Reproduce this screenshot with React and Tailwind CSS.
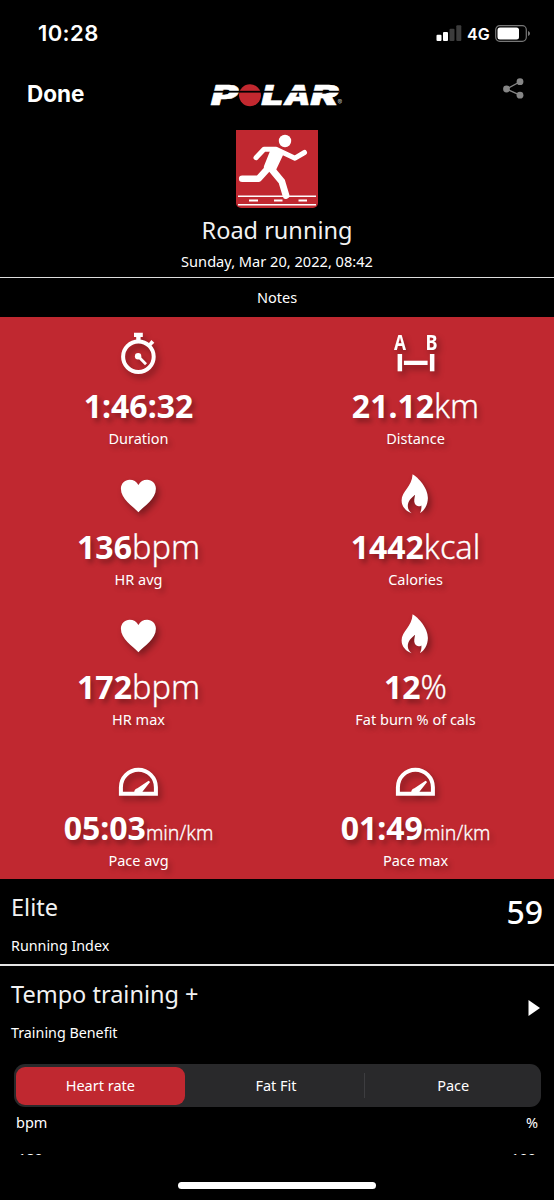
import clsx from 'clsx';

const TABS = ['Heart rate', 'Fat Fit', 'Pace'];

function StopwatchIcon() {
  return (
    <g>
      <circle cx="24" cy="27.7" r="15.3" fill="none" stroke="#fff" strokeWidth="4" />
      <path d="M19.6 3.7h8.8v4.2h-2.2v4h-4.4v-4h-2.2z" />
      <path d="M33.6 15.2l3.4-4.2 2.9 2.8-3.8 3.8z" />
      <circle cx="23.7" cy="27.3" r="3.2" />
      <path d="M24 27.5l7.6 7.8" stroke="#fff" strokeWidth="2.8" />
    </g>
  );
}

function DistanceIcon() {
  return (
    <g>
      <text x="2.6" y="20.8" fontSize="20.5" fontWeight="700" textLength="12" lengthAdjust="spacingAndGlyphs">A</text>
      <text x="34.2" y="20.8" fontSize="20.5" fontWeight="700" textLength="12" lengthAdjust="spacingAndGlyphs">B</text>
      <rect x="6.2" y="25" width="4.5" height="17.3" />
      <rect x="12.5" y="31.7" width="23.7" height="4.3" />
      <rect x="38.5" y="25" width="4.5" height="17.3" />
    </g>
  );
}

function HeartIcon() {
  return (
    <path d="M24 42.2C18 36 6.5 29 6.5 18.8c0-5.2 4-9 8.8-9 3.7 0 7 1.8 8.7 5.2 1.7-3.4 5-5.2 8.7-5.2 4.8 0 8.8 3.8 8.8 9C41.5 29 30 36 24 42.2z" />
  );
}

function FlameIcon() {
  return (
    <path d="M21.2 4.2c5.5 3 15.5 14 15.3 23.8-.1 7-3.5 12.5-8 15.2 1.3-2.6 1.7-5.2 1.5-7.8-2.3 1.6-5.3.8-6.5-1.6-1.3-2.6-.4-5.8.2-9-4 3-7.3 6.7-7.3 11.5 0 2.6 1.5 5 3.8 6.9C14.6 41.2 10.2 36.5 10.2 30.5c0-9.5 10.3-13.5 11-26.3z" />
  );
}

function GaugeIcon() {
  return (
    <g>
      <path d="M6.5 42.8v-6.5a17.5 17.5 0 0 1 35 0v6.5z" fill="none" stroke="#fff" strokeWidth="4" />
      <path d="M20 42.5a4.5 4.5 0 0 1 3-5.3l11.2-7.5 1.5 1.4-7.5 9.4v2z" />
    </g>
  );
}

const METRICS = [
  { label: 'Duration', value: '1:46:32', icon: StopwatchIcon },
  { label: 'Distance', value: '21.12', unit: 'km', icon: DistanceIcon },
  { label: 'HR avg', value: '136', unit: 'bpm', icon: HeartIcon },
  { label: 'Calories', value: '1442', unit: 'kcal', icon: FlameIcon },
  { label: 'HR max', value: '172', unit: 'bpm', icon: HeartIcon },
  { label: 'Fat burn % of cals', value: '12', unit: '%', icon: FlameIcon },
  { label: 'Pace avg', value: '05:03', unit: 'min/km', icon: GaugeIcon, small: true },
  { label: 'Pace max', value: '01:49', unit: 'min/km', icon: GaugeIcon, small: true },
];

function StatusBar() {
  return (
    <div className="flex h-[66px] items-center justify-between pr-[24px] pl-[38px] font-['Inter',sans-serif]">
      <span className="mt-px text-[22px] font-semibold tracking-[0.4px]">10:28</span>
      <div className="flex items-center">
        <svg width="26" height="16" viewBox="0 0 26 16" fill="#fff">
          <rect x="0.5" y="9.7" width="5" height="6.3" rx="1" />
          <rect x="7" y="7" width="5" height="9" rx="1" />
          <rect x="13.5" y="3.7" width="5" height="12.3" rx="1" fill="#3c3c3c" />
          <rect x="20.3" y="0.3" width="5" height="15.7" rx="1" fill="#3c3c3c" />
        </svg>
        <span className="ml-[5px] w-[23px] pt-px text-base font-semibold">4G</span>
        <svg className="ml-[5px]" width="35" height="17" viewBox="0 0 35 17">
          <rect x="0.7" y="0.7" width="30.6" height="15.6" rx="4" fill="none" stroke="#777" strokeWidth="1.2" />
          <rect x="2.5" y="2.5" width="21.5" height="12" rx="2.5" fill="#fff" />
          <path d="M33 6v5c1.2-.5 2-1.4 2-2.5s-.8-2-2-2.5z" fill="#777" />
        </svg>
      </div>
    </div>
  );
}

function PolarLogo() {
  return (
    <svg width="136" height="26" viewBox="0 0 136 26" fill="#fff" className="overflow-visible font-['Inter',sans-serif]">
      <g fontSize="26.5" fontWeight="900" fontStyle="italic" stroke="#fff" strokeWidth="0.5" strokeLinejoin="round">
        <text x="2" y="21.7" textLength="27" lengthAdjust="spacingAndGlyphs">P</text>
        <text x="52.5" y="21.7" textLength="22" lengthAdjust="spacingAndGlyphs">L</text>
        <text x="75" y="21.7" textLength="26.5" lengthAdjust="spacingAndGlyphs">A</text>
        <text x="101.5" y="21.7" textLength="28" lengthAdjust="spacingAndGlyphs">R</text>
      </g>
      <circle cx="41" cy="12.3" r="11" fill="#c2282f" />
      <rect x="0" y="7.8" width="130" height="1.8" fill="#000" />
      <text x="128.5" y="22" fontSize="7" fill="#bbb">®</text>
    </svg>
  );
}

function RunnerTile() {
  return (
    <svg width="82" height="78" viewBox="0 0 82 78" fill="none" stroke="#fff" strokeLinecap="round" strokeLinejoin="round">
      <path d="M0 0h82v73a5 5 0 0 1-5 5H5a5 5 0 0 1-5-5z" fill="#c02830" stroke="none" />
      <path d="M2 66.3h78M2 74.7h78" strokeWidth="1.6" strokeLinecap="butt" />
      <path d="M13 70.5h9M38 70.5h8.5M62.5 70.5h8.5" strokeWidth="2" strokeLinecap="butt" />
      <circle cx="49" cy="11" r="6.2" fill="#fff" stroke="none" />
      <path d="M20 27.7l8-8.5h12l19 9 9.5-5.7" strokeWidth="5" />
      <path d="M37 19.5l8.5 3.5-8 17-7.5-3z" fill="#fff" strokeWidth="4.5" />
      <path d="M6.2 48.7h16.3l10-11" strokeWidth="6.6" />
      <path d="M35 38.5l10.8 13 4.2 14" strokeWidth="6.8" />
    </svg>
  );
}

function Metric({ label, value, unit, icon: Icon, small }) {
  return (
    <div className="flex h-[140.5px] flex-col items-center pt-3">
      <svg width="48" height="48" viewBox="0.6 0 48 48" fill="#fff" className="overflow-visible drop-shadow-[3px_4px_3px_rgba(0,0,0,0.35)]">
        <Icon />
      </svg>
      <p className="mt-[7px] h-[44px] text-[32px] leading-[44px] whitespace-nowrap [text-shadow:3px_4px_5px_rgba(0,0,0,0.3)]">
        <span className="font-bold">{value}</span>
        {unit && (
          <span className={clsx('leading-none font-light [-webkit-text-stroke:0.3px_#fff]', small ? 'text-[19.5px]' : 'text-[32.5px]')}>
            {unit}
          </span>
        )}
      </p>
      <p className="text-[14.5px] leading-5 [text-shadow:3px_4px_5px_rgba(0,0,0,0.3)]">{label}</p>
    </div>
  );
}

export default function App() {
  return (
    <div className="flex h-[1200px] w-[554px] flex-col overflow-hidden bg-black font-['Noto_Sans','Open_Sans',sans-serif] text-white">
      <StatusBar />

      <header className="grid h-16 grid-cols-[1fr_auto_1fr] items-start px-[27px]">
        <button className="mt-[13px] justify-self-start font-['Inter',sans-serif] text-[22.5px] leading-[30px] font-bold">Done</button>
        <div className="mt-[17px]"><PolarLogo /></div>
        <svg className="mt-[12px] mr-px justify-self-end" width="26" height="22" viewBox="0 0 26 22" fill="#868686">
          <path d="M20 3.7L6.5 11l13.5 6.2" fill="none" stroke="#868686" strokeWidth="1.3" />
          <circle cx="6.5" cy="11" r="3.4" />
          <circle cx="20" cy="3.7" r="3.4" />
          <circle cx="20" cy="17.2" r="3.4" />
        </svg>
      </header>

      <section className="flex h-[148px] shrink-0 flex-col items-center border-b-[1.5px] border-[#ddd]">
        <RunnerTile />
        <h1 className="mt-[4px] text-[23.5px] leading-9 text-[#f2f2f2]">Road running</h1>
        <p className="mt-px text-[14.6px] leading-6">Sunday, Mar 20, 2022, 08:42</p>
      </section>
      <div className="flex h-[39px] shrink-0 items-center justify-center text-[14.5px]">Notes</div>

      <section className="grid h-[562px] shrink-0 grid-cols-2 bg-[#c02830]">
        {METRICS.map((metric) => (
          <Metric key={metric.label} {...metric} />
        ))}
      </section>

      <section className="flex h-[87px] shrink-0 justify-between border-b-2 border-[#e5e5e5] px-[11px]">
        <div>
          <h2 className="mt-[9.5px] text-[23.5px] leading-9 text-[#f2f2f2]">Elite</h2>
          <p className="mt-[9.5px] text-[14.3px] leading-6">Running Index</p>
        </div>
        <span className="mt-[11px] text-[32px] leading-[44px] font-medium">59</span>
      </section>

      <section className="flex h-[98px] shrink-0 justify-between pr-[14px] pl-[11px]">
        <div>
          <h2 className="mt-[9.5px] text-[23.5px] leading-9 text-[#f2f2f2]">Tempo training +</h2>
          <p className="mt-[9.5px] text-[14.3px] leading-6">Training Benefit</p>
        </div>
        <svg className="mt-[34px]" width="12" height="16" viewBox="0 0 12 16" fill="#fff">
          <path d="M.5 0L12 8 .5 16z" />
        </svg>
      </section>

      <div className="mr-[13px] ml-[14px] grid h-[43px] shrink-0 grid-cols-3 items-center rounded-[11px] bg-[#29292b] text-[14.5px]">
        {TABS.map((tab, i) => (
          <button
            key={tab}
            className={clsx(
              i === 0 && 'mr-[5px] ml-[2px] h-[38px] rounded-[9px] bg-[#c02830]',
              i === 1 && 'pr-[3px]',
              i === 2 && '-ml-px h-[25px] border-l border-[#3d3d40]',
            )}
          >
            {tab}
          </button>
        ))}
      </div>

      {/* top of the chart, scrolled under the bottom inset */}
      <div className="h-[48px] shrink-0 overflow-hidden pr-4 pl-4 text-[14.5px]">
        <div className="flex justify-between pt-[3px] leading-6">
          <span>bpm</span>
          <span>%</span>
        </div>
        <div className="mt-[12px] flex justify-between pr-[2px] pl-[2px] leading-6">
          <span>180</span>
          <span>100</span>
        </div>
      </div>

      <div className="mx-auto mt-[27px] h-[7px] w-[198px] shrink-0 rounded-full bg-white" />
    </div>
  );
}
